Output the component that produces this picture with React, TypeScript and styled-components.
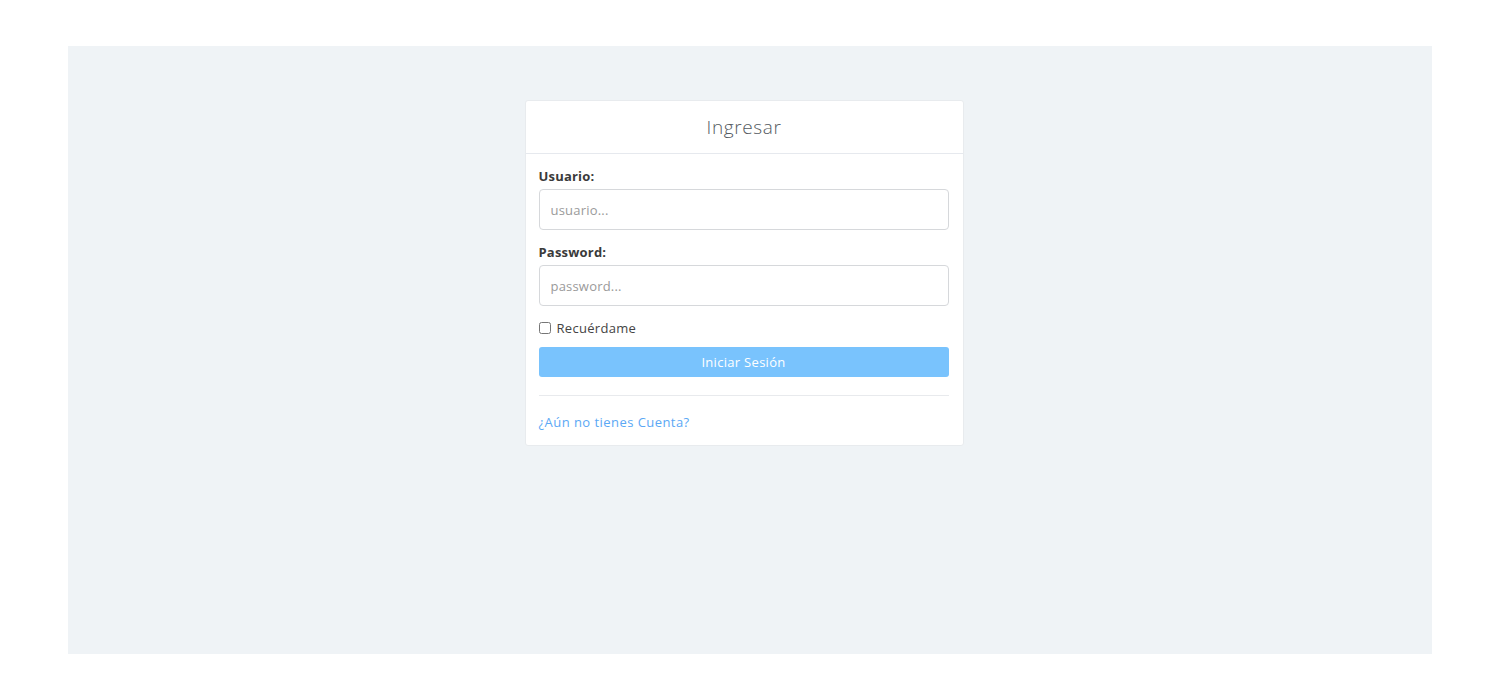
import React from "react";
import styled, { createGlobalStyle } from "styled-components";

const Global = createGlobalStyle`
  html, body { margin: 0; padding: 0; background: #ffffff; }
  body { font-family: "Open Sans", "Noto Sans", sans-serif; }
  * { box-sizing: border-box; }
`;

const Page = styled.div`
  padding: 46px 68px;
  width: 1500px;
  height: 700px;
`;

const Stage = styled.div`
  background: #eff3f6;
  height: 608px;
  display: flex;
  justify-content: center;
  align-items: flex-start;
  padding: 54px 12px 0 0;
`;

const Card = styled.div`
  width: 439px;
  background: #ffffff;
  border: 1px solid #e8ebee;
  border-radius: 3px;
`;

const Header = styled.div`
  height: 53px;
  display: flex;
  align-items: center;
  justify-content: center;
  border-bottom: 1px solid #e6e9ee;
  font-size: 19px;
  font-weight: 300;
  color: #555b61;
  letter-spacing: 0.6px;
`;

const Body = styled.div`
  padding: 13px 14px 14px 13px;
`;

const Field = styled.div`
  display: flex;
  flex-direction: column;
  gap: 4px;
  margin-bottom: 13px;
`;

const Label = styled.label`
  font-size: 13px;
  font-weight: 700;
  color: #3a3a3a;
  line-height: 18px;
  letter-spacing: 0.2px;
`;

const Input = styled.input`
  height: 41px;
  width: 100%;
  border: 1px solid #d6d8db;
  border-radius: 4px;
  padding: 0 11px;
  font-family: inherit;
  font-size: 13px;
  color: #444;
  outline: none;
  letter-spacing: 0.2px;
  &::placeholder { color: #9a9a9a; }
`;

const CheckRow = styled.label`
  display: flex;
  align-items: center;
  gap: 6px;
  font-size: 13px;
  color: #444;
  line-height: 18px;
  letter-spacing: 0.3px;
  input { margin: 0; width: 12px; height: 12px; }
`;

const Button = styled.button`
  margin-top: 10px;
  width: 100%;
  height: 30px;
  border: none;
  border-radius: 3px;
  background: #79c3fd;
  color: #ffffff;
  font-family: inherit;
  font-size: 13px;
  letter-spacing: 0.3px;
`;

const Divider = styled.hr`
  border: none;
  border-top: 1px solid #e8eaed;
  margin: 18px 0 17px;
`;

const Link = styled.a`
  font-size: 13px;
  color: #5ba8f5;
  text-decoration: none;
  line-height: 18px;
  letter-spacing: 0.45px;
  display: block;
`;

export default function App() {
  return (
    <>
      <Global />
      <Page>
        <Stage>
          <Card>
            <Header>Ingresar</Header>
            <Body>
              <Field>
                <Label>Usuario:</Label>
                <Input placeholder="usuario..." />
              </Field>
              <Field>
                <Label>Password:</Label>
                <Input type="password" placeholder="password..." />
              </Field>
              <CheckRow>
                <input type="checkbox" />
                Recuérdame
              </CheckRow>
              <Button>Iniciar Sesión</Button>
              <Divider />
              <Link href="#">¿Aún no tienes Cuenta?</Link>
            </Body>
          </Card>
        </Stage>
      </Page>
    </>
  );
}
